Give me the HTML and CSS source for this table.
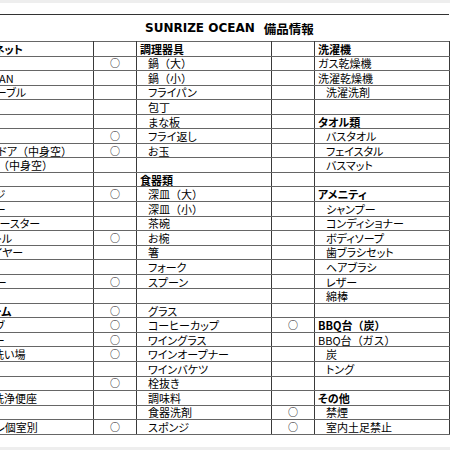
FILE: index.html
```html
<!DOCTYPE html>
<html lang="ja">
<head>
<meta charset="utf-8">
<title>SUNRIZE OCEAN 備品情報</title>
<link rel="stylesheet" href="styles.css">
</head>
<body>
<div class="topband"></div>
<div class="sheet">
  <div class="title"><span class="latin">SUNRIZE OCEAN</span><span class="gap"></span><span class="jp">備品情報</span></div>
  <table class="grid">
    <colgroup>
      <col class="c-first"><col class="c-mark"><col class="c-name"><col class="c-mark"><col class="c-name">
    </colgroup>
    <tbody>
      <tr><td class="hd p0">インターネット</td><td class="mk"></td><td class="hd">調理器具</td><td class="mk"></td><td class="hd">洗濯機</td></tr>
      <tr><td class="p3">Wi-Fi</td><td class="mk">○</td><td class="ind">鍋<span class="fw">（大）</span></td><td class="mk"></td><td>ガス乾燥機</td></tr>
      <tr><td class="p3">有線LAN</td><td class="mk"></td><td class="ind">鍋<span class="fw">（小）</span></td><td class="mk"></td><td>洗濯乾燥機</td></tr>
      <tr><td class="p2">LANケーブル</td><td class="mk"></td><td class="ind">フライパン</td><td class="mk"></td><td class="ind">洗濯洗剤</td></tr>
      <tr><td class="p0"></td><td class="mk"></td><td class="ind">包丁</td><td class="mk"></td><td></td></tr>
      <tr><td class="hd p0">家電</td><td class="mk"></td><td class="ind">まな板</td><td class="mk"></td><td class="hd">タオル類</td></tr>
      <tr><td class="p0">テレビ</td><td class="mk">○</td><td class="ind">フライ返し</td><td class="mk"></td><td class="ind">バスタオル</td></tr>
      <tr><td class="p1">冷蔵庫2ドア<span class="fw">（中身空）</span></td><td class="mk">○</td><td class="ind">お玉</td><td class="mk"></td><td class="ind">フェイスタル</td></tr>
      <tr><td class="p2">冷凍庫<span class="fw">（中身空）</span></td><td class="mk"></td><td></td><td class="mk"></td><td class="ind">バスマット</td></tr>
      <tr><td class="p0">炊飯器</td><td class="mk"></td><td class="hd">食器類</td><td class="mk"></td><td></td></tr>
      <tr><td class="p0">電子レンジ</td><td class="mk">○</td><td class="ind">深皿<span class="fw">（大）</span></td><td class="mk"></td><td class="hd">アメニティ</td></tr>
      <tr><td class="p2">ミキサー</td><td class="mk"></td><td class="ind">深皿<span class="fw">（小）</span></td><td class="mk"></td><td class="ind">シャンプー</td></tr>
      <tr><td class="p6">トースター</td><td class="mk"></td><td class="ind">茶碗</td><td class="mk"></td><td class="ind">コンディショナー</td></tr>
      <tr><td class="p5">ケトル</td><td class="mk">○</td><td class="ind">お椀</td><td class="mk"></td><td class="ind">ボディソープ</td></tr>
      <tr><td class="p0">ヘアドライヤー</td><td class="mk"></td><td class="ind">箸</td><td class="mk"></td><td class="ind">歯ブラシセット</td></tr>
      <tr><td class="p0">掃除機</td><td class="mk"></td><td class="ind">フォーク</td><td class="mk"></td><td class="ind">ヘアブラシ</td></tr>
      <tr><td class="p2">ハンガー</td><td class="mk">○</td><td class="ind">スプーン</td><td class="mk"></td><td class="ind">レザー</td></tr>
      <tr><td class="p0"></td><td class="mk"></td><td></td><td class="mk"></td><td class="ind">綿棒</td></tr>
      <tr><td class="hd p1">バスルーム</td><td class="mk">○</td><td class="ind">グラス</td><td class="mk"></td><td></td></tr>
      <tr><td class="p2">バスタブ</td><td class="mk">○</td><td class="ind">コーヒーカップ</td><td class="mk">○</td><td class="hd">BBQ台<span class="fw">（炭）</span></td></tr>
      <tr><td class="p2">シャワー</td><td class="mk">○</td><td class="ind">ワイングラス</td><td class="mk"></td><td>BBQ台<span class="fw">（ガス）</span></td></tr>
      <tr><td class="p3">浴室洗い場</td><td class="mk">○</td><td class="ind">ワインオープナー</td><td class="mk"></td><td class="ind">炭</td></tr>
      <tr><td class="p0"></td><td class="mk"></td><td class="ind">ワインバケツ</td><td class="mk"></td><td class="ind">トング</td></tr>
      <tr><td class="hd p0">トイレ</td><td class="mk">○</td><td class="ind">栓抜き</td><td class="mk"></td><td></td></tr>
      <tr><td class="p3">温水洗浄便座</td><td class="mk"></td><td class="ind">調味料</td><td class="mk"></td><td class="hd">その他</td></tr>
      <tr><td class="p0"></td><td class="mk"></td><td class="ind">食器洗剤</td><td class="mk">○</td><td class="ind">禁煙</td></tr>
      <tr><td class="p4">トイレ個室別</td><td class="mk">○</td><td class="ind">スポンジ</td><td class="mk">○</td><td class="ind">室内土足禁止</td></tr>
    </tbody>
  </table>
</div>
<div class="bottomband"></div>
</body>
</html>
```
FILE: styles.css
```css
html, body {
  margin: 0;
  padding: 0;
  background: #ffffff;
}
body {
  width: 450px;
  height: 450px;
  overflow: hidden;
  font-family: "Noto Sans CJK JP", sans-serif;
  color: #000;
}
.topband {
  height: 3px;
  background: #eeeeee;
}
.sheet {
  margin: 11px 0 0 -51px;
  width: 500px;
}
.title {
  height: 26px;
  border-top: 1px solid #333;
  display: flex;
  align-items: center;
  padding-left: 196px;
  font-weight: bold;
}
.title .latin {
  font-family: "DejaVu Sans", sans-serif;
  font-size: 12px;
}
.title .gap {
  width: 9px;
}
.title .jp {
  font-family: "Noto Sans CJK JP", sans-serif;
  font-size: 12.5px;
}
.grid {
  border-collapse: collapse;
  table-layout: fixed;
  width: 500px;
  font-size: 11px;
  font-feature-settings: "palt" 1;
}
.c-first { width: 144px; }
.c-mark { width: 43px; }
.c-name { width: 135px; }
.grid tr {
  height: 14.56px;
}
.grid td {
  border-top: 1px solid #666;
  border-bottom: 1px solid #666;
  border-left: 1px solid #3a3a3a;
  border-right: 1px solid #3a3a3a;
  padding: 0 3px;
  line-height: 12px;
  white-space: nowrap;
  overflow: hidden;
  vertical-align: middle;
}
.grid .fw {
  font-feature-settings: normal;
}
.grid td.ind { padding-left: 11px; }
.grid td.p0 { padding-left: 3px; }
.grid td.p1 { padding-left: 9px; }
.grid td.p2 { padding-left: 15px; }
.grid td.p3 { padding-left: 21px; }
.grid td.p4 { padding-left: 27px; }
.grid td.p5 { padding-left: 33px; }
.grid td.p6 { padding-left: 41px; }
.grid td.hd {
  font-weight: bold;
}
.grid td.mk {
  text-align: center;
  padding: 0;
  font-size: 10px;
}
.bottomband {
  margin-top: 12px;
  height: 4px;
  background: #eeeeee;
}
```
